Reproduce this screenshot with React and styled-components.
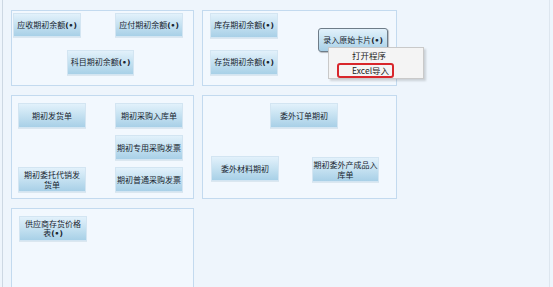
import styled, { createGlobalStyle } from "styled-components";

const GlobalStyle = createGlobalStyle`
  html, body {
    margin: 0;
    padding: 0;
    background: #eef5fc;
  }
  body {
    font-family: "Noto Sans CJK SC", "Liberation Sans", sans-serif;
  }
`;

const Page = styled.div`
  width: 548px;
  height: 287px;
  margin-left: 2px;
  border-left: 1px solid #cdd8e3;
  border-right: 1px solid #dde6ef;
  box-sizing: border-box;
  padding: 10px 0 0 8px;
  overflow: hidden;
  display: grid;
  grid-template-columns: 183px 195px;
  grid-template-rows: 76px 104px 120px;
  column-gap: 8px;
  row-gap: 9px;
`;

const Panel = styled.div`
  box-sizing: border-box;
  border: 1px solid #c3daef;
  background: #f2f8fe;
  display: flex;
  flex-direction: ${(p) => (p.$row ? "row" : "column")};
  align-items: flex-start;
  padding-top: ${(p) => p.$pt || 0}px;
  grid-column: ${(p) => p.$col || "auto"};
`;

const Row = styled.div`
  display: flex;
  align-items: flex-start;
  margin-top: ${(p) => p.$mt || 0}px;
`;

const Stack = styled.div`
  display: flex;
  flex-direction: column;
  gap: 12px;
  padding: 2px 0 0 7px;
`;

const Btn = styled.div`
  box-sizing: border-box;
  width: ${(p) => p.$w || 68}px;
  height: ${(p) => p.$h || 25}px;
  margin-left: ${(p) => p.$ml || 0}px;
  margin-top: ${(p) => p.$mt || 0}px;
  display: flex;
  align-items: center;
  justify-content: center;
  text-align: center;
  padding: 0 1px;
  font-size: 8px;
  line-height: 9.5px;
  color: #18242f;
  white-space: nowrap;
  background: linear-gradient(#e2f1fb 0%, #c8e3f2 45%, #a8d0e7 100%);
  border: 1px solid ${(p) => (p.$hover ? "#6e7c88" : "#d3e5f2")};
  border-radius: ${(p) => (p.$hover ? 3 : 0)}px;
  box-shadow: ${(p) =>
    p.$hover ? "1px 1px 1px rgba(0,0,0,0.25)" : "0 1px 0 rgba(150,180,200,0.25)"};
`;

const Label = styled.span`
  display: block;
`;

const Dot = styled.span`
  font-weight: 700;
  font-family: "DejaVu Sans", sans-serif;
  font-size: 7.5px;
  vertical-align: 0;
`;

const Anchor = styled.div`
  position: relative;
  margin-left: 40px;
  margin-top: 17px;
`;

const Menu = styled.div`
  position: absolute;
  left: 10px;
  top: 19px;
  width: 96px;
  height: 32px;
  box-sizing: border-box;
  background: #f4f4f4;
  border: 1px solid #c9c9c9;
  box-shadow: 2px 2px 2px rgba(0, 0, 0, 0.15);
  display: flex;
  flex-direction: column;
  z-index: 2;
`;

const MenuItem = styled.div`
  box-sizing: border-box;
  margin-left: 8px;
  width: 57px;
  height: 15px;
  padding-left: 13px;
  font-size: 8.5px;
  line-height: 11px;
  color: #1e1e1e;
  white-space: nowrap;
  border: 2px solid ${(p) => (p.$active ? "#d8262b" : "transparent")};
  border-radius: 3px;
`;

const Mark = () => <Dot>(•)</Dot>;

export default function App() {
  return (
    <>
      <GlobalStyle />
      <Page>
        <Panel $pt={2}>
          <Row>
            <Btn $ml={1} $h={24}><Label>应收期初余额<Mark /></Label></Btn>
            <Btn $ml={34} $h={24}><Label>应付期初余额<Mark /></Label></Btn>
          </Row>
          <Row $mt={13}>
            <Btn $ml={55} $w={67}><Label>科目期初余额<Mark /></Label></Btn>
          </Row>
        </Panel>

        <Panel $row>
          <Stack>
            <Btn><Label>库存期初余额<Mark /></Label></Btn>
            <Btn><Label>存货期初余额<Mark /></Label></Btn>
          </Stack>
          <Anchor>
            <Btn $hover $w={70} $h={24}><Label>录入原始卡片<Mark /></Label></Btn>
            <Menu>
              <MenuItem>打开程序</MenuItem>
              <MenuItem $active>Excel导入</MenuItem>
            </Menu>
          </Anchor>
        </Panel>

        <Panel $pt={7}>
          <Row>
            <Btn $ml={6}><Label>期初发货单</Label></Btn>
            <Btn $ml={29}><Label>期初采购入库单</Label></Btn>
          </Row>
          <Row $mt={7}>
            <Btn $ml={103}><Label>期初专用采购发票</Label></Btn>
          </Row>
          <Row $mt={7}>
            <Btn $ml={6}>
              <Label>
                期初委托代销发
                <br />
                货单
              </Label>
            </Btn>
            <Btn $ml={29}><Label>期初普通采购发票</Label></Btn>
          </Row>
        </Panel>

        <Panel $pt={7}>
          <Row>
            <Btn $ml={67}><Label>委外订单期初</Label></Btn>
          </Row>
          <Row $mt={28}>
            <Btn $ml={8}><Label>委外材料期初</Label></Btn>
            <Btn $ml={33} $mt={1} $w={67}>
              <Label>
                期初委外产成品入
                <br />
                库单
              </Label>
            </Btn>
          </Row>
        </Panel>

        <Panel $pt={7} $col="1">
          <Row>
            <Btn $ml={7}>
              <Label>
                供应商存货价格
                <br />
                表<Mark />
              </Label>
            </Btn>
          </Row>
        </Panel>
      </Page>
    </>
  );
}
